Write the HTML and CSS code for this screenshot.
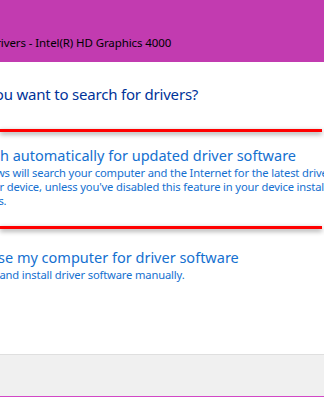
FILE: index.html
```html
<!DOCTYPE html>
<html lang="en">
<head>
  <meta charset="UTF-8" />
  <meta name="viewport" content="width=device-width, initial-scale=1.0">
  <title>Update Drivers</title>
  <link rel="stylesheet" href="styles.css">
</head>
<body>

  <div class="window">
    <header class="titlebar">
      <span class="title">Update Drivers - Intel(R) HD Graphics 4000</span>
    </header>

    <div class="content">
      <h1 class="question">How do you want to search for drivers?</h1>

      <div class="option marked">
        <div class="option-body">
          <div class="option-title">Search automatically for updated driver software</div>
          <div class="option-desc">
            Windows will search your computer and the Internet for the latest driver software<br>
            for your device, unless you've disabled this feature in your device installation<br>
            settings.
          </div>
        </div>
      </div>

      <div class="option">
        <div class="option-body">
          <div class="option-title">Browse my computer for driver software</div>
          <div class="option-desc">Locate and install driver software manually.</div>
        </div>
      </div>
    </div>

    <div class="footer"></div>
  </div>

</body>
</html>
```

FILE: styles.css
```css
body {
  margin: 0;
  padding: 0;
  background-color: #fff;
  font-family: 'Noto Sans', sans-serif;
}

.window {
  width: 324px;
  height: 397px;
  overflow: hidden;
  display: flex;
  flex-direction: column;
  border-bottom: 1px solid #d247c6;
  box-sizing: border-box;
}

.titlebar {
  height: 62px;
  background-color: #c23bb0;
  padding-top: 35px;
  box-sizing: border-box;
  white-space: nowrap;
}

.title {
  display: block;
  margin-left: -54px;
  font-size: 11.5px;
  letter-spacing: -0.1px;
  line-height: 16px;
  color: #000;
}

.content {
  flex: 1;
  white-space: nowrap;
}

.question {
  margin: 22px 0 0 -69px;
  font-size: 15px;
  letter-spacing: -0.2px;
  line-height: 20px;
  font-weight: normal;
  color: #003399;
}

.option {
  color: #1470d0;
}

.option-body {
  margin-left: -37px;
}

.option.marked {
  margin-top: 25px;
}

.option.marked::before,
.option.marked::after {
  content: "";
  display: block;
  width: 322px;
  height: 3px;
  background-color: #ff0000;
  box-shadow: 0 2px 5px rgba(0, 0, 0, 0.45);
}

.option.marked .option-body {
  padding: 13px 0 18px;
}

.option.marked + .option .option-body {
  padding-top: 18px;
}

.option-title {
  font-size: 14.5px;
  line-height: 20px;
}

.option-desc {
  margin-top: 1px;
  font-size: 11.2px;
  letter-spacing: -0.15px;
  line-height: 14px;
}

.footer {
  height: 41px;
  background-color: #f0f0f0;
  border-top: 1px solid #dfdfdf;
}
```
